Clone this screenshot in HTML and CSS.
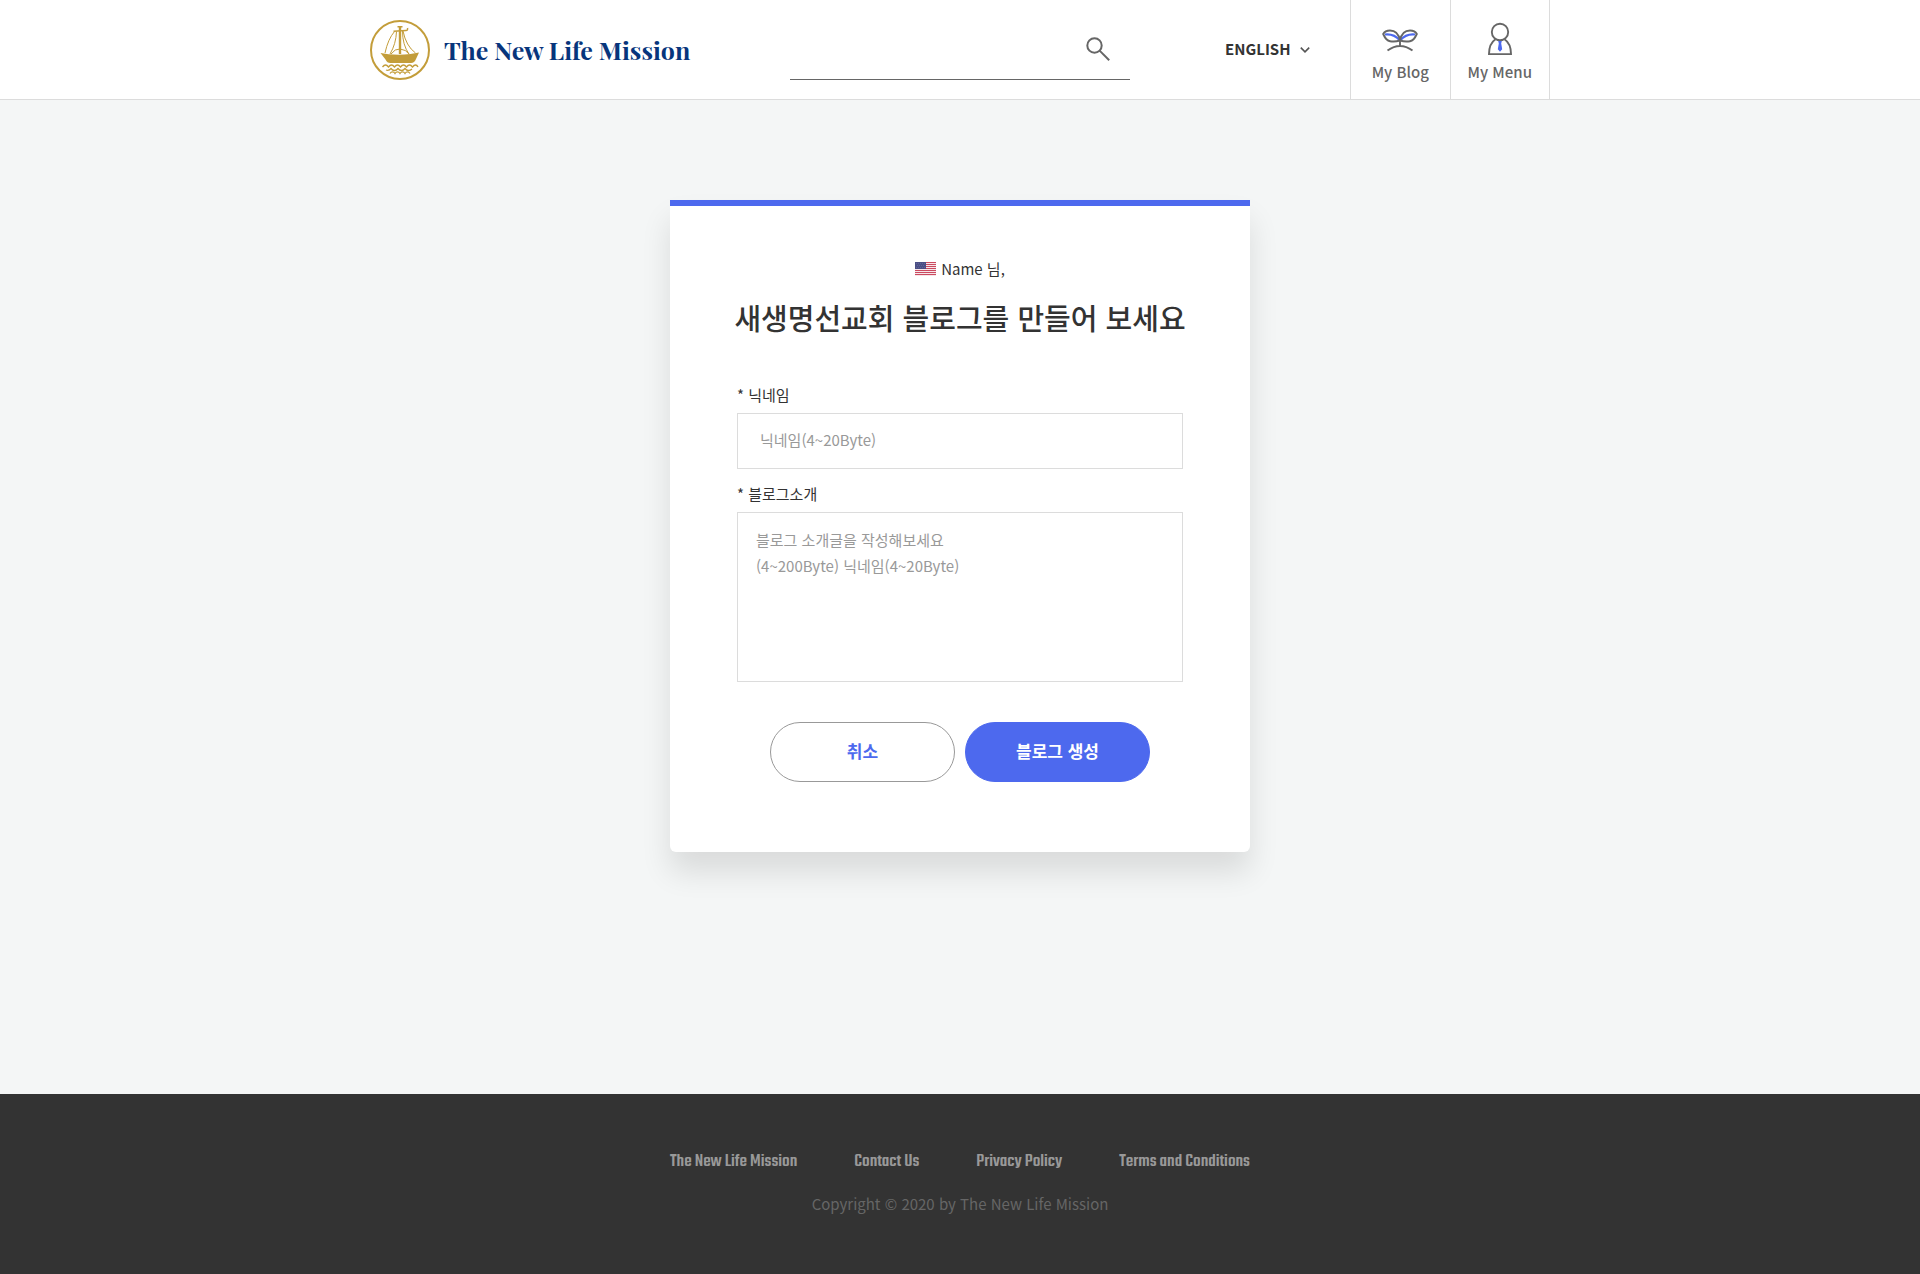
FILE: index.html
```html
<!DOCTYPE html>
<html lang="ko">
<head>
<meta charset="utf-8">
<meta name="viewport" content="width=device-width, initial-scale=1">
<title>The New Life Mission</title>
<link rel="stylesheet" href="styles.css">
</head>
<body>
<header class="header">
  <div class="header-inner">
    <a class="brand" href="#">
      <svg class="brand-mark" viewBox="0 0 60 60" fill="none" stroke="#c39d3a" aria-hidden="true">
        <circle cx="30" cy="30" r="29" stroke-width="2"/>
        <path d="M10.500 33l8 1.200q11 1 22-.2l8.500-1.500-3 6.500q-1.500 4-5 4H20.500q-3.500 0-5-3.500z" fill="#c39d3a" stroke="none"/>
        <path d="M30 6v28" stroke-width="2.400"/>
        <path d="M27.500 6.800h5M23.500 11.300l12.500-.8q2 0 1.500-2.500" stroke-width="1.500"/>
        <path d="M24.500 11.500Q18 19 15 33M26.500 11.500Q26 24 20 34M33 11q3 15 12.500 22M32.500 11q0 14 6.500 23M21 34q4-5.500 9-5Q36 29.500 39 34" stroke-width="1"/>
        <path d="M12.500 47q1.500-2 3-2t3 2q1.500-2 3-2t3 2q1.500-2 3-2t3 2q1.500-2 3-2t3 2q1.500-2 3-2t3 2q1.500-2 3-2t2.500 2M16 50q3 1 5-1.500 1.500 2 3.500 2t3.500-2q1.500 2 3.500 2t3.500-2q1.500 2 3.500 2t3.500-1.500M20 53.500q1-1.700 2.500-1.700t2.500 1.700q1-1.700 2.500-1.700t2.500 1.700q1-1.700 2.500-1.700t2.500 1.700q1-1.700 2.500-1.700t2.500 1.700" stroke-width="1.300"/>
      </svg>
      <span class="brand-name">The New Life Mission</span>
    </a>
    <form class="search" role="search">
      <input class="search-input" type="search" aria-label="Search">
      <button class="search-button" type="button" aria-label="Search">
        <svg width="24" height="24" viewBox="0 0 24 24" fill="none" stroke="#666" stroke-width="2" aria-hidden="true">
          <circle cx="8.500" cy="8.500" r="7.200"/>
          <path d="M13.600 13.600l9.600 9.600"/>
        </svg>
      </button>
    </form>
    <div class="language">
      <select class="language-select" aria-label="Language">
        <option>ENGLISH</option>
      </select>
      <svg class="language-arrow" width="10" height="6" viewBox="0 0 10 6" fill="none" stroke="#555" stroke-width="1.600" aria-hidden="true"><path d="M.8.6L5 4.800 9.200.6"/></svg>
    </div>
    <nav class="tools">
      <a class="tool" href="#">
        <svg width="36" height="36" viewBox="0 0 36 36" fill="none" stroke="#666" stroke-width="1.900" aria-hidden="true">
          <path d="M3 14.500q9-1 15 6M33 14.500q-9-1-15 6" stroke="#4d69ee" stroke-width="2"/>
          <path d="M1.200 14Q3 10.500 8 10.500q8 0 10 10Q13 22 8 21.200 4 20.500 1.200 14zM34.800 14Q33 10.500 28 10.500q-8 0-10 10Q23 22 28 21.200 32 20.500 34.800 14z"/>
          <path d="M18 20v6M5.500 30.500Q18 21.500 30.500 30.500"/>
        </svg>
        <span>My Blog</span>
      </a>
      <a class="tool" href="#">
        <svg width="36" height="36" viewBox="0 0 36 36" fill="none" stroke="#666" stroke-width="1.900" aria-hidden="true">
          <circle cx="18" cy="12" r="8.200"/>
          <path d="M13.500 19.200Q7 23.500 7 34.100h22Q29 23.500 22.500 19.200"/>
          <path d="M16.200 21h3.600l-.6 2.500 1 5.800L18 31.800l-2.200-2.500 1-5.800z" fill="#4d69ee" stroke="none"/>
        </svg>
        <span>My Menu</span>
      </a>
    </nav>
  </div>
</header>

<main class="main">
  <form class="card">
    <p class="greeting">
      <svg width="21" height="14" viewBox="0 0 21 14" aria-hidden="true">
        <path fill="#f6e6e9" d="M0 0h21v14H0z"/>
        <path stroke="#cb4a60" d="M0 .5h21M0 2.500h21M0 4.500h21M0 6.500h21M0 8.500h21M0 10.500h21M0 12.500h21"/>
        <path fill="#4b4f86" d="M0 0h11v7H0z"/>
        <path stroke="#8a8db0" stroke-width=".6" stroke-dasharray=".6 1.400" d="M1 1.500h9M2 3.500h8M1 5.500h9"/>
      </svg>
      <span>Name 님,</span>
    </p>
    <h1 class="title">새생명선교회 블로그를 만들어 보세요</h1>
    <label class="label" for="nickname">* 닉네임</label>
    <input class="field" id="nickname" type="text" placeholder="닉네임(4~20Byte)">
    <label class="label" for="intro">* 블로그소개</label>
    <textarea class="field field-area" id="intro" placeholder="블로그 소개글을 작성해보세요
(4~200Byte) 닉네임(4~20Byte)"></textarea>
    <div class="actions">
      <button class="button" type="button">취소</button>
      <button class="button button-primary" type="button">블로그 생성</button>
    </div>
  </form>
</main>

<footer class="footer">
  <nav class="footer-links">
    <a href="#">The New Life Mission</a>
    <a href="#">Contact Us</a>
    <a href="#">Privacy Policy</a>
    <a href="#">Terms and Conditions</a>
  </nav>
  <p class="copyright">Copyright © 2020 by The New Life Mission</p>
</footer>
</body>
</html>
```

FILE: styles.css
```css
* {
  box-sizing: border-box;
}

body {
  margin: 0;
  min-height: 100vh;
  display: flex;
  flex-direction: column;
  background: #f4f6f6;
  color: #333;
  font-family: "Noto Sans CJK KR", sans-serif;
  font-size: 15px;
  line-height: 24px;
}

a {
  color: inherit;
  text-decoration: none;
}

input,
textarea,
select,
button {
  font: inherit;
}

.header {
  background: #fff;
  border-bottom: 1px solid #dcdcdc;
}

.header-inner {
  display: flex;
  align-items: center;
  max-width: 1180px;
  min-height: 99px;
  margin: 0 auto;
}

.brand {
  display: flex;
  align-items: center;
  gap: 14px;
}

.brand-mark {
  width: 60px;
  height: 60px;
}

.brand-name {
  color: #07357c;
  font-family: "Playfair Display", "Liberation Serif", serif;
  font-size: 25px;
  font-weight: 700;
  line-height: 32px;
  white-space: nowrap;
}

.search {
  display: flex;
  align-items: center;
  width: 340px;
  height: 60px;
  margin-left: auto;
  padding-right: 20px;
  border-bottom: 1px solid #666;
}

.search-input {
  flex: 1;
  min-width: 0;
  border: 0;
  outline: 0;
  background: none;
}

.search-button {
  display: flex;
  padding: 0;
  border: 0;
  background: none;
}

.language {
  position: relative;
  margin: 0 40px 2px 95px;
}

.language-select {
  display: block;
  width: 85px;
  padding: 0;
  border: 0;
  appearance: none;
  background: none;
  color: #333;
  font-weight: 700;
}

.language-arrow {
  position: absolute;
  top: 10px;
  right: 0;
  pointer-events: none;
}

.tools {
  display: flex;
  align-self: stretch;
  width: 200px;
  border-left: 1px solid #dcdcdc;
}

.tool {
  display: flex;
  flex: 1;
  flex-direction: column;
  align-items: center;
  padding-top: 20px;
  gap: 4px;
  border-right: 1px solid #dcdcdc;
  color: #666;
  font-weight: 500;
}

.main {
  flex: 1;
  padding: 100px 20px;
}

.card {
  display: flex;
  flex-direction: column;
  max-width: 580px;
  margin: 0 auto;
  padding: 51px 67px 70px;
  border-top: 6px solid #4d69ee;
  border-radius: 0 0 6px 6px;
  background: #fff;
  box-shadow: 0 20px 30px rgba(0, 0, 0, .11);
}

.greeting {
  display: flex;
  align-items: center;
  justify-content: center;
  gap: 5px;
  margin: 0;
}

.title {
  margin: 16px -10px 46px;
  font-size: 29px;
  font-weight: 500;
  line-height: 40px;
  text-align: center;
  word-break: keep-all;
}

.label {
  padding-bottom: 6px;
}

.field {
  width: 100%;
  height: 56px;
  margin: 0 0 13px;
  padding: 0 22px 4px;
  border: 1px solid #dcdcdc;
  background: #fff;
  color: #333;
}

.field-area {
  height: 170px;
  margin-bottom: 40px;
  padding: 14px 18px;
  line-height: 26px;
  resize: none;
}

.field::placeholder {
  color: #999;
}

.actions {
  display: flex;
  justify-content: center;
  gap: 10px;
}

.button {
  width: 185px;
  height: 60px;
  padding: 0 0 2px;
  border: 1px solid #999;
  border-radius: 30px;
  background: #fff;
  color: #4d69ee;
  font-size: 17px;
  font-weight: 700;
}

.button-primary {
  border-color: #4d69ee;
  background: #4d69ee;
  color: #fff;
}

.footer {
  display: flex;
  flex-direction: column;
  align-items: center;
  gap: 18px;
  min-height: 180px;
  padding: 56px 20px;
  background: #333;
}

.footer-links {
  display: flex;
  justify-content: space-between;
  width: 100%;
  max-width: 580px;
  color: #999;
  font-family: "Teko", "Liberation Sans Narrow", sans-serif;
  font-size: 19px;
  font-weight: 500;
}

.copyright {
  margin: 0;
  color: #666;
}
```
